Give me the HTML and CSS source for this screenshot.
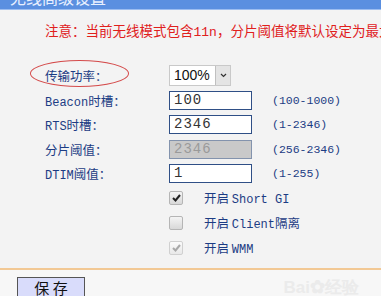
FILE: index.html
```html
<!DOCTYPE html>
<html lang="zh">
<head>
    <meta charset="UTF-8">
    <title>无线高级设置</title>
    <link rel="stylesheet" href="styles.css">
</head>
<body>

    <div class="title-bar"><span>无线高级设置</span></div>

    <div class="notice">注意：当前无线模式包含<span class="mono">11n</span>，分片阈值将默认设定为最大值</div>

    <div class="form-grid">
        <div class="label circled">传输功率：</div>
        <div class="field">
            <div class="select-box">
                <span class="select-value">100%</span>
                <span class="select-arrow">
                    <svg width="7" height="5" viewBox="0 0 7 5"><path d="M1 1 L3.5 3.5 L6 1" fill="none" stroke="#333" stroke-width="1.2"/></svg>
                </span>
            </div>
        </div>
        <div class="range"></div>

        <div class="label"><span class="mono">Beacon</span>时槽：</div>
        <div class="field"><div class="text-box">100</div></div>
        <div class="range">(100-1000)</div>

        <div class="label"><span class="mono">RTS</span>时槽：</div>
        <div class="field"><div class="text-box">2346</div></div>
        <div class="range">(1-2346)</div>

        <div class="label">分片阈值：</div>
        <div class="field"><div class="text-box disabled">2346</div></div>
        <div class="range">(256-2346)</div>

        <div class="label"><span class="mono">DTIM</span>阈值：</div>
        <div class="field"><div class="text-box">1</div></div>
        <div class="range">(1-255)</div>

        <div class="label"></div>
        <div class="field check-row">
            <span class="check on">
                <svg width="9" height="8" viewBox="0 0 9 8"><path d="M1 4 L3.5 6.5 L8 1" fill="none" stroke="#222" stroke-width="2"/></svg>
            </span>
            <span class="check-text">开启 <span class="mono">Short GI</span></span>
        </div>
        <div class="range"></div>

        <div class="label"></div>
        <div class="field check-row">
            <span class="check"></span>
            <span class="check-text">开启 <span class="mono">Client</span>隔离</span>
        </div>
        <div class="range"></div>

        <div class="label"></div>
        <div class="field check-row">
            <span class="check on faded">
                <svg width="9" height="8" viewBox="0 0 9 8"><path d="M1 4 L3.5 6.5 L8 1" fill="none" stroke="#a8a8a8" stroke-width="2"/></svg>
            </span>
            <span class="check-text">开启 <span class="mono">WMM</span></span>
        </div>
        <div class="range"></div>
    </div>

    <div class="footer">
        <button class="save-btn">保 存</button>
        <span class="watermark">Bai<b>&#10047;</b>经验</span>
    </div>

</body>
</html>
```

FILE: styles.css
```css
body {
    margin: 0;
    width: 381px;
    height: 296px;
    overflow: hidden;
    background: #f3f3f3;
    font-family: "Noto Sans CJK SC", "Liberation Sans", sans-serif;
}

.mono {
    font-family: "Liberation Mono", "Noto Sans CJK SC", monospace;
}

.title-bar {
    height: 9px;
    background: #5a8fe0;
    border-bottom: 1px solid #9cbdf0;
    overflow: hidden;
}

.title-bar span {
    display: block;
    margin: -12px 0 0 10px;
    color: #e8f0ff;
    font-size: 16px;
    line-height: 18px;
}

.notice {
    margin-top: 11px;
    padding-left: 45px;
    height: 19px;
    line-height: 19px;
    color: #e0201c;
    font-size: 13.5px;
    white-space: nowrap;
    overflow: hidden;
}

.notice .mono {
    font-size: 13px;
}

.form-grid {
    display: grid;
    grid-template-columns: 124px 103px 1fr;
    grid-template-rows: 26px 24px 25px 24px 24px 25px 25px 25px;
    margin-top: 22px;
    padding-left: 45px;
    align-items: center;
}

.label {
    position: relative;
    color: #1c3c84;
    font-size: 12.5px;
    white-space: nowrap;
}

.label .mono {
    font-size: 12px;
}

.circled::before {
    content: "";
    position: absolute;
    left: -15px;
    top: -6px;
    width: 97px;
    height: 25px;
    border: 1px solid #d44a4a;
    border-radius: 50%;
}

.range {
    color: #1c3c84;
    font-family: "Liberation Mono", monospace;
    font-size: 11.5px;
}

.select-box {
    display: flex;
    width: 60px;
    height: 19px;
    border: 1px solid #c9c9c9;
    background: #fff;
}

.select-value {
    flex: 1;
    padding-left: 4px;
    font-family: "Liberation Sans", sans-serif;
    font-size: 14px;
    line-height: 19px;
    color: #111;
}

.select-arrow {
    width: 14px;
    display: flex;
    align-items: center;
    justify-content: center;
    background: #e4e4e4;
    border-left: 1px solid #c0c0c0;
}

.text-box {
    width: 77px;
    height: 17px;
    border: 1px solid #2f4f86;
    background: #fff;
    padding-left: 4px;
    font-family: "Liberation Mono", monospace;
    font-size: 14px;
    letter-spacing: 1px;
    line-height: 17px;
    color: #333;
}

.text-box.disabled {
    background: #c9c9c9;
    border-color: #8393ad;
    color: #9a9a9a;
}

.check-row {
    display: flex;
    align-items: center;
    white-space: nowrap;
}

.check {
    flex-shrink: 0;
    width: 12px;
    height: 12px;
    border: 1px solid #b5b5b5;
    border-radius: 2px;
    background: linear-gradient(#f4f4f4, #d8d8d8);
    display: flex;
    align-items: center;
    justify-content: center;
}

.check.faded {
    border-color: #d0d0d0;
    background: linear-gradient(#fafafa, #e8e8e8);
}

.check-text {
    margin-left: 21px;
    color: #1c3c84;
    font-size: 12.5px;
}

.check-text .mono {
    font-size: 12px;
}

.footer {
    position: relative;
    margin-top: 8px;
    border-top: 2px solid #f2c894;
    background: #f7f7f7;
    height: 40px;
    padding: 5px 0 0 17px;
}

.save-btn {
    width: 68px;
    height: 23px;
    padding: 0;
    border: 1px solid #555;
    background: #d9dcfb;
    color: #111;
    font-family: "Noto Sans CJK SC", sans-serif;
    font-size: 15px;
    line-height: 20px;
}

.watermark {
    position: absolute;
    right: 22px;
    top: 6px;
    color: #ebebeb;
    font-family: "Liberation Sans", sans-serif;
    font-size: 17px;
    font-weight: bold;
}

.watermark b {
    font-size: 18px;
}
```
